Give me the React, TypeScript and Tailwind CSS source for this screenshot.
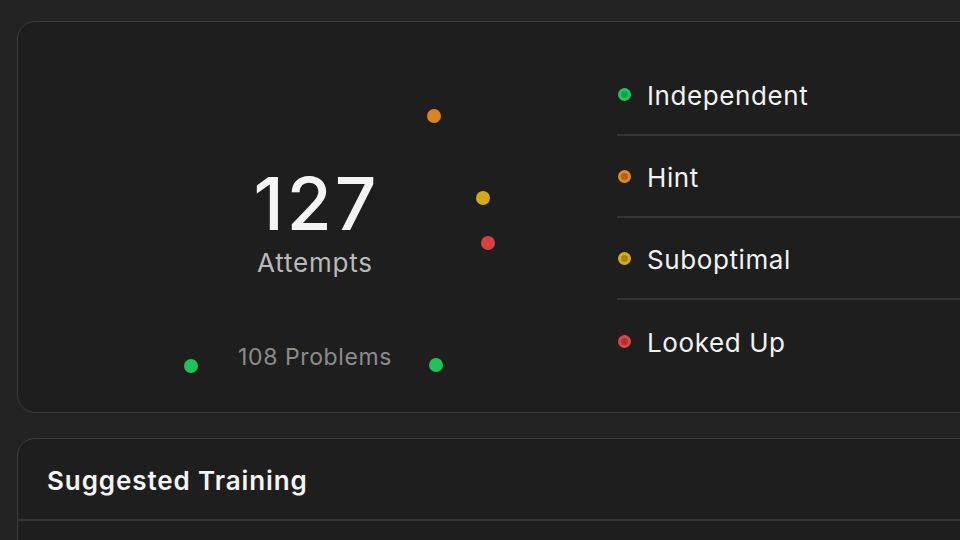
import React from 'react';

type Outcome = { label: string; fill: string; ring: string };

const OUTCOMES: Outcome[] = [
  { label: 'Independent', fill: '#1a9e49', ring: '#22c55e' },
  { label: 'Hint', fill: '#a8621a', ring: '#e08a24' },
  { label: 'Suboptimal', fill: '#a5850f', ring: '#d8ae18' },
  { label: 'Looked Up', fill: '#a83434', ring: '#e04545' },
];

// arc end caps of the attempts ring (x, y, colour)
const CAPS: [number, number, string][] = [
  [416, 94, '#d9841f'],
  [465, 176, '#d4aa17'],
  [470, 221, '#d94141'],
  [173, 344, '#1fc35a'],
  [418, 343, '#1fc35a'],
];

function AttemptsRing() {
  return (
    <svg className="absolute inset-0" width="599" height="390" viewBox="0 0 599 390">
      {CAPS.map(([x, y, c], i) => (
        <circle key={i} cx={x} cy={y} r="7" fill={c} />
      ))}
    </svg>
  );
}

export default function App() {
  return (
    <div className="min-h-[540px] h-[540px] overflow-hidden bg-[#232323] pl-[17px] pt-[21px] font-['Inter','Liberation_Sans',sans-serif] antialiased">
      <div className="flex w-[1000px] h-[392px] rounded-[18px] border border-[#3b3b3b] bg-[#1e1e1e]">
        <div className="relative w-[599px] shrink-0">
          <AttemptsRing />
          <div className="relative flex flex-col items-center pr-[5px] pt-[140px]">
            <div className="text-[73px] leading-[84px] font-medium text-[#f4f4f4] tracking-[3px] pl-[3px]">127</div>
            <div className="mt-[2px] text-[26px] leading-[30px] text-[#b9b9b9] tracking-[0.8px]">Attempts</div>
            <div className="mt-[65px] text-[23px] leading-[28px] text-[#8c8c8c] tracking-[0.6px]">108 Problems</div>
          </div>
        </div>
        <div className="flex-1 pt-[32px]">
          {OUTCOMES.map((o, i) => (
            <div
              key={o.label}
              className={`flex h-[82px] items-center gap-[16px] ${i < OUTCOMES.length - 1 ? 'border-b-2 border-[#353535]' : ''}`}
            >
              <span
                className="ml-[1px] block h-[13px] w-[13px] rounded-full border-[3px]"
                style={{ background: o.fill, borderColor: o.ring }}
              />
              <span className="pt-[3px] text-[26px] leading-[32px] tracking-[0.6px] text-[#f2f2f2]">{o.label}</span>
            </div>
          ))}
        </div>
      </div>

      <div className="mt-[25px] w-[1000px] h-[200px] rounded-[18px] border border-[#3b3b3b] bg-[#1e1e1e]">
        <div className="flex h-[82px] items-center border-b-2 border-[#353535] pl-[29px]">
          <span className="pt-[4px] text-[26px] leading-[32px] font-semibold tracking-[0.9px] text-[#f4f4f4]">Suggested Training</span>
        </div>
      </div>
    </div>
  );
}
